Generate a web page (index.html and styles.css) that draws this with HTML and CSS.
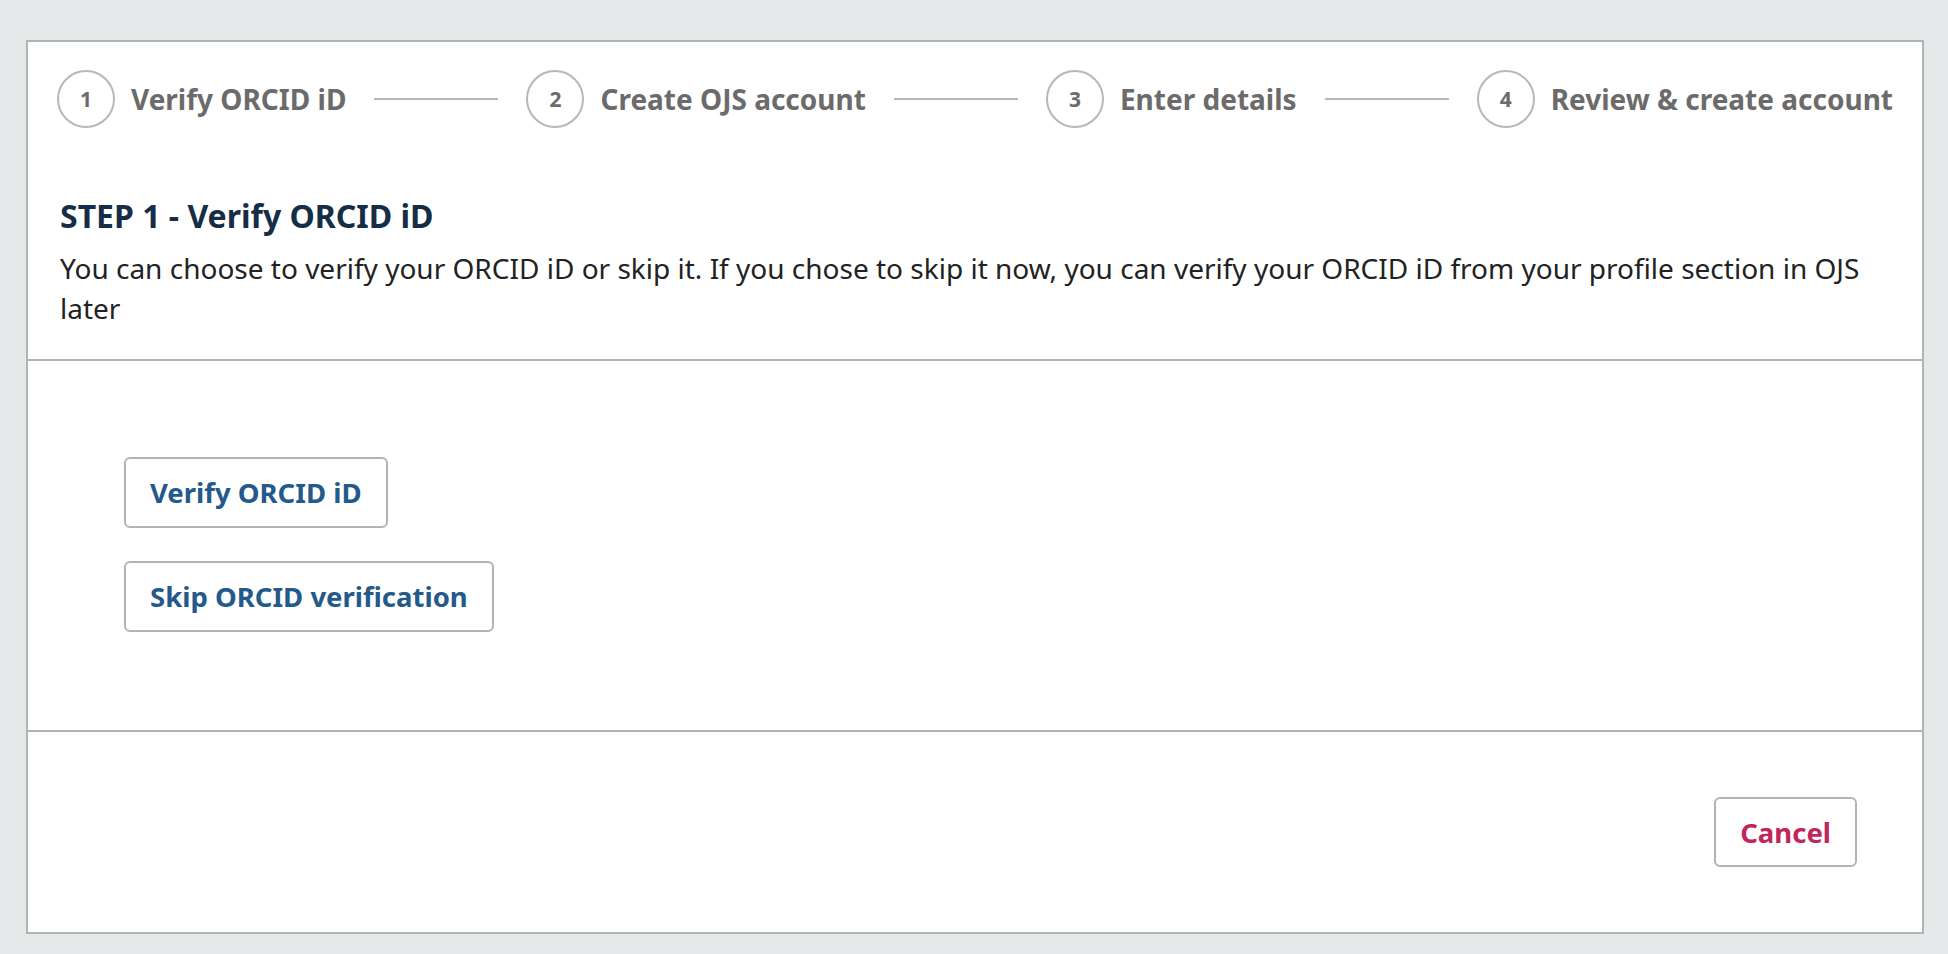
FILE: index.html
```html
<!DOCTYPE html>
<html lang="en">
<head>
<meta charset="utf-8">
<title>Verify ORCID iD</title>
<link rel="stylesheet" href="styles.css">
</head>
<body>
<div class="page">
  <div class="card">
    <section class="intro">
      <ol class="stepper">
        <li class="step"><span class="step-num">1</span><span class="step-label">Verify ORCID iD</span></li>
        <li class="step-line"></li>
        <li class="step"><span class="step-num">2</span><span class="step-label">Create OJS account</span></li>
        <li class="step-line"></li>
        <li class="step"><span class="step-num">3</span><span class="step-label">Enter details</span></li>
        <li class="step-line"></li>
        <li class="step"><span class="step-num">4</span><span class="step-label">Review &amp; create account</span></li>
      </ol>
      <h1 class="title">STEP 1 - Verify ORCID iD</h1>
      <p class="desc">You can choose to verify your ORCID iD or skip it. If you chose to skip it now, you can verify your ORCID iD from your profile section in OJS later</p>
    </section>
    <section class="actions">
      <button class="btn btn-primary" type="button">Verify ORCID iD</button>
      <button class="btn btn-primary" type="button">Skip ORCID verification</button>
    </section>
    <footer class="footer">
      <button class="btn btn-cancel" type="button">Cancel</button>
    </footer>
  </div>
</div>
</body>
</html>
```

FILE: styles.css
```css
html, body {
  margin: 0;
  padding: 0;
  background: #e5e9ea;
  font-family: "Noto Sans", "Open Sans", sans-serif;
}

.page {
  padding: 40px 24px 20px 26px;
  height: 954px;
  box-sizing: border-box;
}

.card {
  background: #ffffff;
  border: 2px solid #b3b3b3;
  height: 894px;
  box-sizing: border-box;
  display: flex;
  flex-direction: column;
}

.intro {
  padding: 28px 29px 31px 32px;
  border-bottom: 2px solid #b3b3b3;
}

.stepper {
  list-style: none;
  margin: 0 0 0 -3px;
  padding: 0;
  display: flex;
  align-items: center;
}

.step {
  display: flex;
  align-items: center;
  gap: 16px;
  flex: none;
}

.step-num {
  width: 58px;
  height: 58px;
  box-sizing: border-box;
  border: 2px solid #b8b8b8;
  border-radius: 50%;
  display: flex;
  align-items: center;
  justify-content: center;
  font-size: 21px;
  font-weight: 700;
  color: #6b6b6b;
}

.step-label {
  font-size: 28px;
  line-height: 38px;
  font-weight: 700;
  color: #6b6b6b;
  white-space: nowrap;
}

.step-line {
  flex: 1;
  height: 2px;
  background: #b8b8b8;
  margin: 0 28px;
}

.title {
  margin: 68px 0 0;
  font-size: 32px;
  line-height: 40px;
  font-weight: 700;
  color: #162d47;
}

.desc {
  margin: 12px 0 0;
  font-size: 28px;
  line-height: 40px;
  color: #222222;
}

.actions {
  flex: 1;
  display: flex;
  flex-direction: column;
  align-items: flex-start;
  gap: 33px;
  padding: 96px 96px;
  border-bottom: 2px solid #b3b3b3;
}

.btn {
  height: 71px;
  box-sizing: border-box;
  padding: 0 24px;
  background: #ffffff;
  border: 2px solid #b3b3b3;
  border-radius: 6px;
  font-family: "Noto Sans", "Open Sans", sans-serif;
  font-size: 27.5px;
  font-weight: 700;
  cursor: pointer;
}

.btn-primary {
  color: #235a8b;
}

.footer {
  display: flex;
  justify-content: flex-end;
  padding: 65px;
}

.btn-cancel {
  height: 70px;
  color: #c2255c;
}
```
